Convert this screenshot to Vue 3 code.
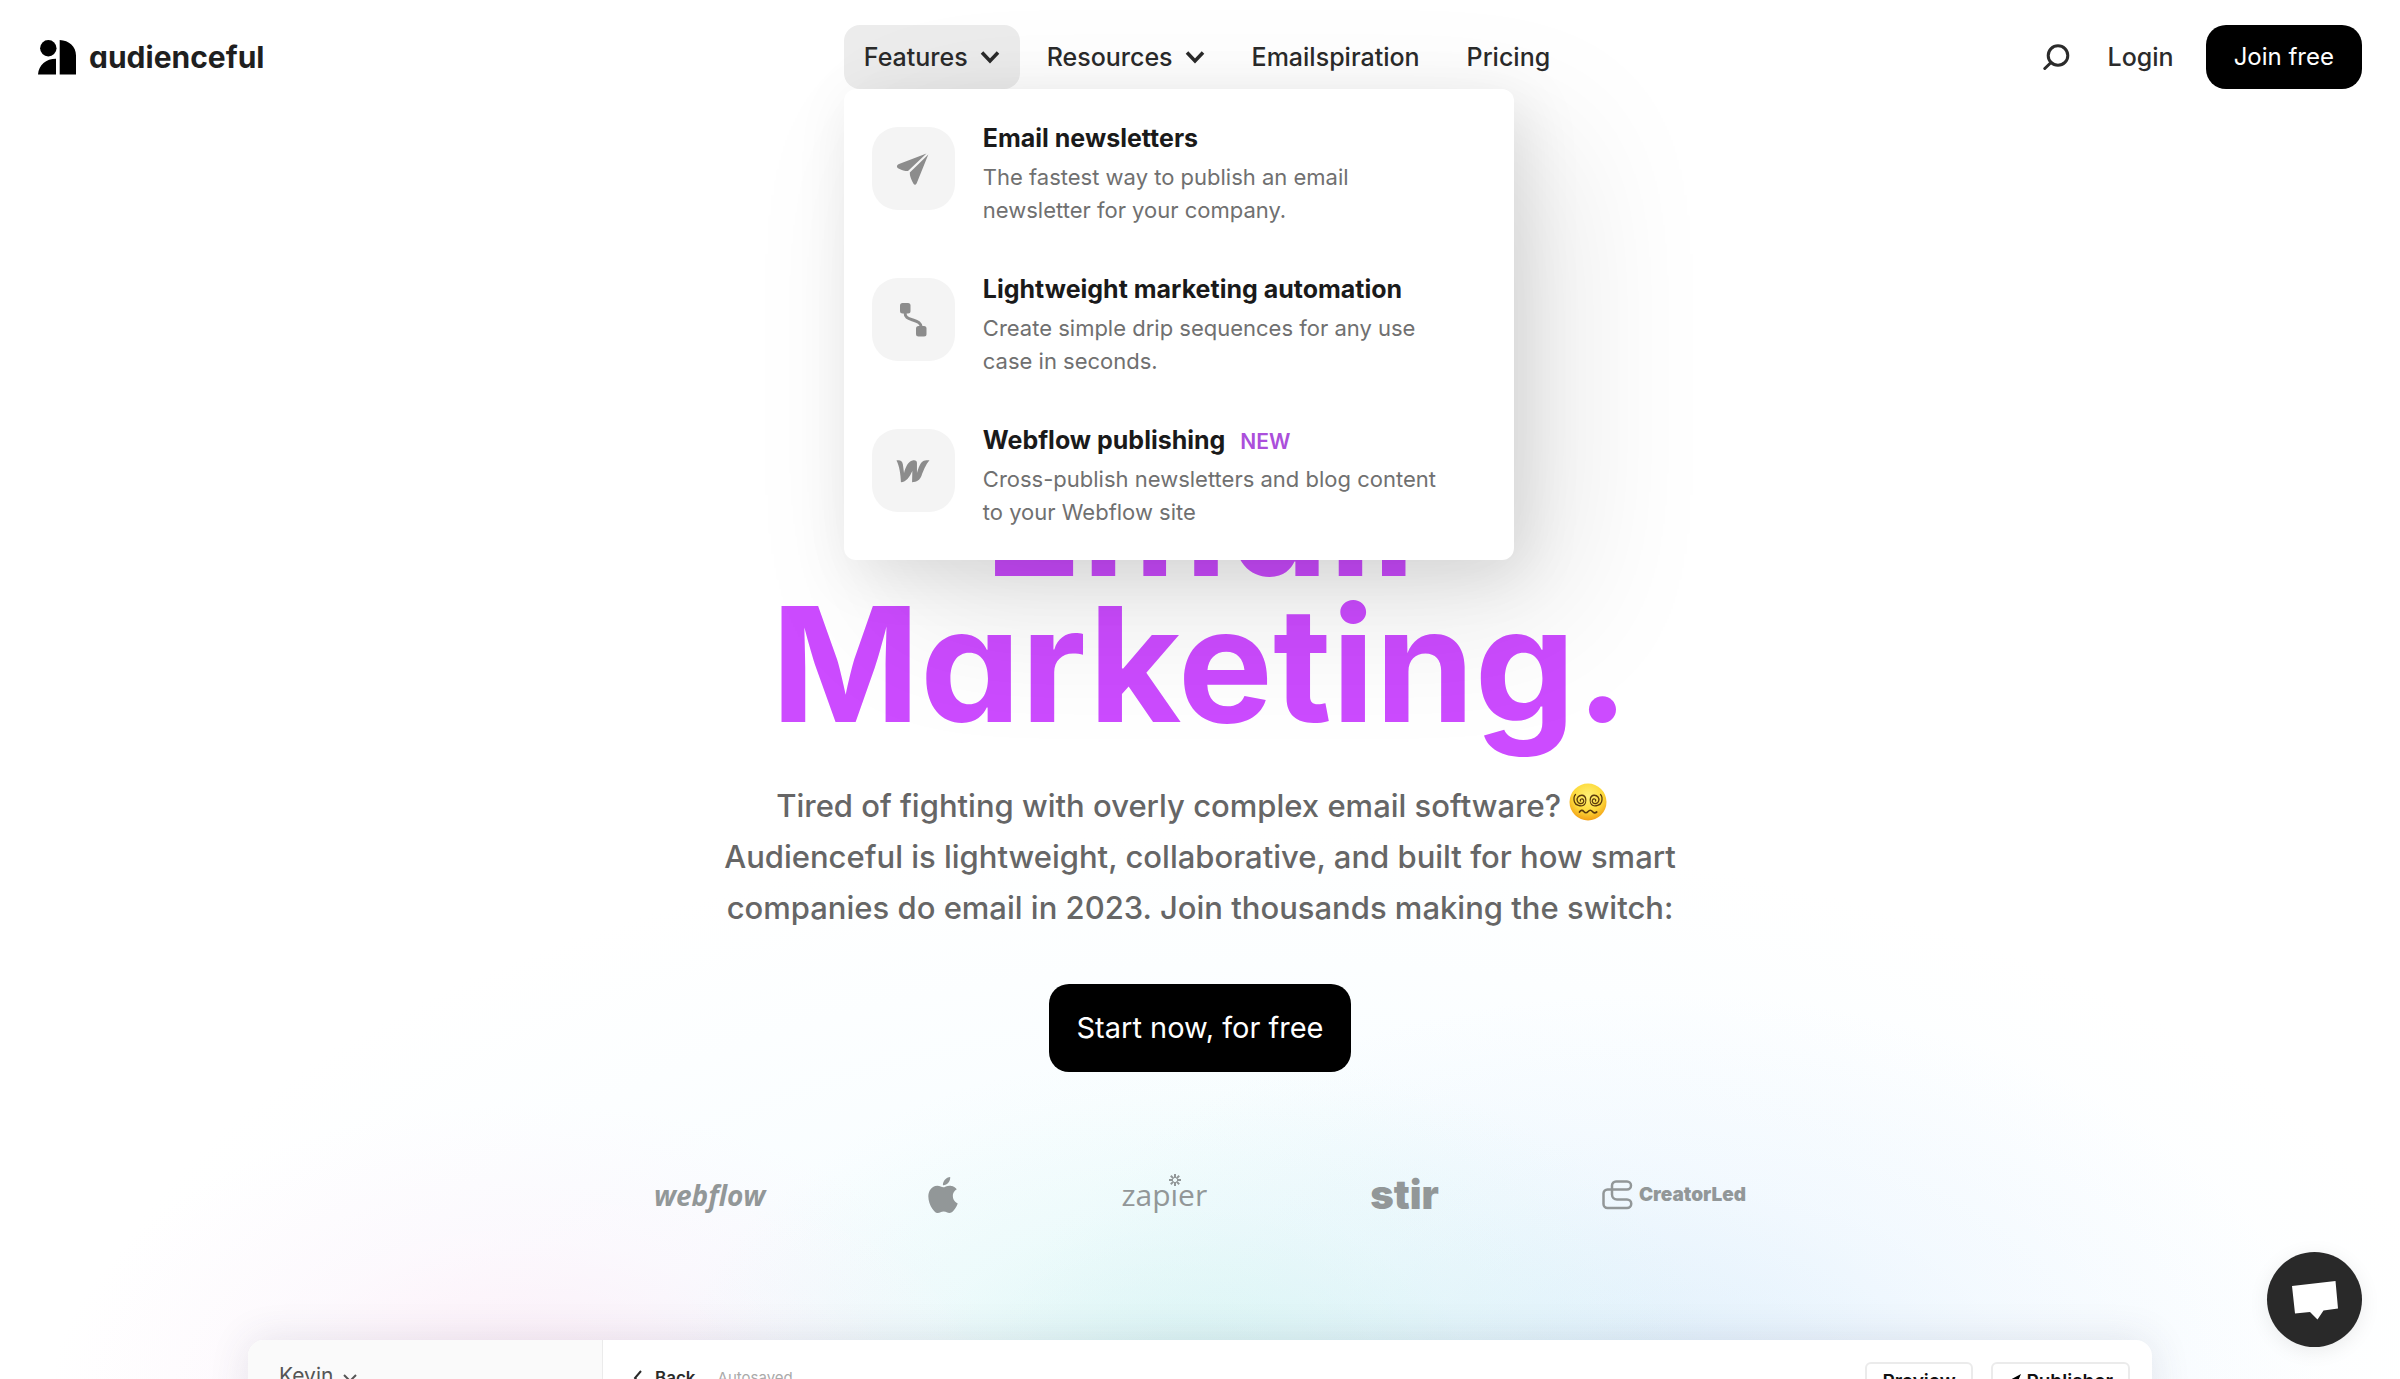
<script setup>
import { ref } from "vue";

const open = ref(true);

const features = [
  {
    icon: "plane",
    title: "Email newsletters",
    text: "The fastest way to publish an email newsletter for your company.",
  },
  {
    icon: "flow",
    title: "Lightweight marketing automation",
    text: "Create simple drip sequences for any use case in seconds.",
  },
  {
    icon: "webflow",
    title: "Webflow publishing",
    badge: "NEW",
    text: "Cross-publish newsletters and blog content to your Webflow site",
  },
];
</script>

<template>
  <div class="page">
    <header class="header">
      <a href="#" class="brand">
        <svg class="brand-mark" viewBox="0 0 38 35" aria-hidden="true">
          <circle cx="10.3" cy="8.2" r="8.2" />
          <path d="M0 34.500C.8 25 8 18.800 18 18.800V34.500zM21.700 0C31 .3 38 6.500 38 15.500V34.500H21.700z" />
        </svg>
        <span class="brand-name">audienceful</span>
      </a>

      <nav class="nav">
        <div class="nav-group">
          <button type="button" class="nav-item" :class="{ active: open }" :aria-expanded="open" @click="open = !open">
            Features
            <svg class="chevron" viewBox="0 0 20 14" aria-hidden="true"><path d="M2 2.500L10 11L18 2.500" /></svg>
          </button>
          <div v-if="open" class="dropdown">
            <a v-for="item in features" :key="item.title" href="#" class="feature">
              <span class="tile">
                <svg v-if="item.icon === 'plane'" viewBox="0 0 34 34" aria-hidden="true">
                  <path d="M30.500 1.500L3 12C.3 13.300.3 15.500 3 16.700C6 18.200 8.500 19 12 19z" />
                  <path d="M32.300 2.500L13.800 20.500C13.500 24 15.500 28 17.500 31.800C18.500 33.300 20 33 20.800 31z" />
                </svg>
                <svg v-else-if="item.icon === 'flow'" viewBox="0 0 34 34" aria-hidden="true">
                  <rect x="4" y="0" width="10.500" height="10.500" rx="2.500" />
                  <rect x="20" y="23" width="10.500" height="10.500" rx="2.500" />
                  <path class="wire" d="M9 9C9 15 12 15.500 17 17S25 20 25.500 25" />
                </svg>
                <svg v-else viewBox="0 0 36 36" aria-hidden="true">
                  <path
                    d="M.5 6.800C4.500 6 6.700 7.500 7.300 11L8.500 20C10 14 13 7.500 17.500 6.800C20.500 6.300 22.200 7 22.200 9.500V20C24 14 26 9 28.500 7.600C30 6.600 33 6.600 35.500 6.700C31.500 11 28.500 19 27 23C25.300 27.500 22 29.800 17 29.800L17.300 18C14.500 24 11 29.800 5.200 29.800C5 22 3.500 12 .5 6.800z"
                  />
                </svg>
              </span>
              <span class="feature-body">
                <span class="feature-title">
                  {{ item.title }}
                  <span v-if="item.badge" class="badge">{{ item.badge }}</span>
                </span>
                <span class="feature-text">{{ item.text }}</span>
              </span>
            </a>
          </div>
        </div>
        <button type="button" class="nav-item">
          Resources
          <svg class="chevron" viewBox="0 0 20 14" aria-hidden="true"><path d="M2 2.500L10 11L18 2.500" /></svg>
        </button>
        <a href="#" class="nav-item">Emailspiration</a>
        <a href="#" class="nav-item">Pricing</a>
      </nav>

      <div class="actions">
        <button type="button" class="search" aria-label="Search">
          <svg viewBox="0 0 27 27" aria-hidden="true">
            <circle cx="15" cy="11.500" r="9.800" />
            <path d="M8 18.500L1.800 24.500" />
          </svg>
        </button>
        <a href="#" class="login">Login</a>
        <a href="#" class="join">Join free</a>
      </div>
    </header>

    <main class="hero">
      <h1>Email<br />Marketing.</h1>
      <p class="lead">
        Tired of fighting with overly complex email software?
        <svg class="emoji" viewBox="0 0 38 38" role="img" aria-label="dizzy face">
          <defs>
            <radialGradient id="face" cx="50%" cy="35%" r="65%">
              <stop offset="0" stop-color="#fff176" />
              <stop offset="0.6" stop-color="#fddb3d" />
              <stop offset="1" stop-color="#f3a116" />
            </radialGradient>
          </defs>
          <circle cx="19" cy="19" r="18.500" fill="url(#face)" />
          <g fill="none" stroke="#5b3a0c" stroke-width="1.300" stroke-linecap="round">
            <path d="M11.500 18c-1-2 2-3 3-1s-1 4-3.500 3.500-4-4-2-6.500 6.500-2.500 7.500 1-.5 6.500-2.500 7.500-7.500 0-8.500-3.500-.5-6 1-7.500" />
            <path d="M26.500 18c1-2-2-3-3-1s1 4 3.500 3.500 4-4 2-6.500-6.500-2.500-7.500 1 .5 6.500 2.500 7.500 7.500 0 8.500-3.500.5-6-1-7.500" />
            <path d="M10.500 29q2.200-3 4.300-.5t4.300 0 4.300 0 4.300.5" stroke-width="1.700" />
          </g>
        </svg>&nbsp;&nbsp;
        <br />
        Audienceful is lightweight, collaborative, and built for how smart<br />
        companies do email in 2023. Join thousands making the switch:
      </p>
      <a href="#" class="cta">Start now, for free</a>

      <div class="logos">
        <span class="logo webflow">webflow</span>
        <svg class="apple" viewBox="2 0 20 24" role="img" aria-label="Apple">
          <path
            d="M12.152 6.896c-.948 0-2.415-1.078-3.960-1.040-2.040.027-3.910 1.183-4.961 3.014-2.117 3.675-.546 9.103 1.519 12.090 1.013 1.454 2.208 3.090 3.792 3.039 1.520-.065 2.090-.987 3.935-.987 1.831 0 2.350.987 3.960.948 1.637-.026 2.676-1.480 3.676-2.948 1.156-1.688 1.636-3.325 1.662-3.415-.039-.013-3.182-1.221-3.220-4.857-.026-3.040 2.480-4.494 2.597-4.559-1.429-2.090-3.623-2.324-4.390-2.376-2-.156-3.675 1.090-4.610 1.090zM15.530 3.830c.843-1.012 1.400-2.427 1.245-3.830-1.207.052-2.662.805-3.532 1.818-.780.896-1.454 2.338-1.273 3.714 1.338.104 2.715-.688 3.559-1.701"
          />
        </svg>
        <span class="logo zapier" aria-label="zapier">
          zap<span class="star-letter">ı<svg class="star" viewBox="0 0 12 12" aria-hidden="true">
            <path d="M6 0V4M6 8V12M0 6H4M8 6H12M1.800 1.800L4.600 4.600M7.400 7.400L10.200 10.200M10.200 1.800L7.400 4.600M4.600 7.400L1.800 10.200" />
          </svg></span>er
        </span>
        <span class="logo stir">stir</span>
        <span class="logo creator">
          <svg viewBox="0 0 31 30" aria-hidden="true">
            <path d="M14 1.500H25a4 4 0 0 1 0 8H5.500a4 4 0 0 0-4 4V24a4 4 0 0 0 4 4H25a4 4 0 0 0 0-8.500H15a5 5 0 0 1-5-5V5.500a4 4 0 0 1 4-4z" />
          </svg>
          CreatorLed
        </span>
      </div>
    </main>

    <section class="app">
      <aside class="app-side">
        Kevin
        <svg class="side-chevron" viewBox="0 0 14 10" aria-hidden="true"><path d="M1 2L7 8L13 2" /></svg>
      </aside>
      <div class="app-bar">
        <button type="button" class="back">
          <svg viewBox="0 0 10 16" aria-hidden="true"><path d="M8 1L2 8L8 15" /></svg>
          Back
        </button>
        <span class="saved">Autosaved</span>
        <button type="button" class="outline">Preview</button>
        <button type="button" class="outline">
          <svg viewBox="0 0 14 14" aria-hidden="true"><path d="M13 0L0 7L5 8.500L7 14z" /></svg>
          Publisher
        </button>
      </div>
    </section>

    <button type="button" class="chat" aria-label="Open chat">
      <svg viewBox="0 0 46 40" aria-hidden="true">
        <path d="M0 6L43.500 1L46 28.500L31.500 30.500L25.500 39.500L18 32L3 33.500z" />
      </svg>
    </button>
  </div>
</template>

<style>
body {
  margin: 0;
}
</style>

<style scoped>
.page {
  position: relative;
  height: 100vh;
  overflow: hidden;
  font-family: Inter, "Liberation Sans", sans-serif;
  color: #2b2b2b;
  background:
    radial-gradient(ellipse 20% 22% at 22% 102%, rgba(255, 215, 236, 0.45), rgba(255, 225, 245, 0.18) 55%, transparent),
    radial-gradient(ellipse 22% 26% at 50% 102%, rgba(190, 242, 228, 0.4), rgba(215, 250, 242, 0.2) 55%, transparent),
    radial-gradient(ellipse 28% 30% at 69% 102%, rgba(195, 222, 248, 0.4), rgba(215, 232, 252, 0.2) 55%, transparent),
    radial-gradient(ellipse 50% 42% at 53% 102%, rgba(210, 238, 248, 0.5), rgba(232, 248, 255, 0.25) 55%, transparent),
    #fff;
}

a {
  color: inherit;
  text-decoration: none;
}

button {
  font: inherit;
  color: inherit;
  border: 0;
  padding: 0;
  background: none;
  cursor: pointer;
}

/* header */
.header {
  display: grid;
  grid-template-columns: 1fr auto 1fr;
  align-items: center;
  padding: 25px 38px;
}

.brand {
  display: flex;
  align-items: center;
  gap: 13px;
}

.brand-mark {
  width: 38px;
  height: 35px;
}

.brand-name {
  font-size: 30px;
  font-weight: 700;
  font-feature-settings: "cv11";
  color: #1f1f1f;
}

.nav {
  display: flex;
  gap: 7px;
  margin-left: 14px;
}

.nav-group {
  position: relative;
}

.nav-item {
  display: flex;
  align-items: center;
  gap: 12px;
  height: 64px;
  padding: 0 20px;
  border-radius: 16px;
  font-size: 25px;
  font-weight: 500;
}

.nav-item.active {
  background: #ececec;
}

.chevron {
  width: 20px;
  height: 14px;
  fill: none;
  stroke: #2b2b2b;
  stroke-width: 3.500;
}

.dropdown {
  position: absolute;
  z-index: 5;
  top: 64px;
  left: 0;
  box-sizing: border-box;
  width: 670px;
  padding: 30px 28px 31px;
  display: flex;
  flex-direction: column;
  gap: 43px;
  background: #fff;
  border-radius: 12px;
  box-shadow:
    50px 50px 150px rgba(0, 0, 0, 0.1),
    10px 14px 60px rgba(0, 0, 0, 0.1);
}

.feature {
  display: flex;
  gap: 28px;
}

.tile {
  display: flex;
  align-items: center;
  justify-content: center;
  flex: none;
  width: 83px;
  height: 83px;
  margin-top: 8px;
  border-radius: 26px;
  background: #f4f4f4;
}

.tile svg {
  width: 34px;
  height: 34px;
  fill: #8c8c8c;
}

.tile .wire {
  fill: none;
  stroke: #8c8c8c;
  stroke-width: 3;
}

.feature-body {
  display: flex;
  flex-direction: column;
  gap: 4px;
}

.feature-title {
  font-size: 25px;
  line-height: 38px;
  font-weight: 700;
  color: #1a1a1a;
}

.badge {
  margin-left: 9px;
  font-size: 21px;
  line-height: 24px;
  font-weight: 600;
  color: #ab4fdb;
}

.feature-text {
  max-width: 470px;
  font-size: 22px;
  line-height: 33px;
  color: #707070;
}

.actions {
  display: flex;
  align-items: center;
  justify-content: flex-end;
}

.search svg {
  display: block;
  width: 27px;
  height: 27px;
  fill: none;
  stroke: #2b2b2b;
  stroke-width: 3;
  stroke-linecap: round;
}

.login {
  margin: 0 32px 0 38px;
  font-size: 25px;
  font-weight: 500;
}

.join {
  padding: 0 28px;
  border-radius: 20px;
  font-size: 24px;
  line-height: 64px;
  color: #fff;
  background: #000;
}

/* hero */
.hero {
  display: flex;
  flex-direction: column;
  align-items: center;
  padding-top: 331px;
  text-align: center;
}

h1 {
  margin: 0;
  font-size: 160px;
  line-height: 146px;
  font-weight: 700;
  font-feature-settings: "cv11";
  color: #cc4bff;
}

.lead {
  margin: 43px 0 0;
  font-size: 31px;
  line-height: 51px;
  font-weight: 500;
  color: #666;
}

.emoji {
  width: 38px;
  height: 38px;
  vertical-align: -4px;
}

.cta {
  margin-top: 51px;
  padding: 0 28px;
  border-radius: 20px;
  font-size: 29px;
  line-height: 88px;
  color: #fff;
  background: #000;
}

.logos {
  display: flex;
  align-items: center;
  gap: 163px;
  height: 48px;
  margin-top: 99px;
  color: #929798;
}

.logo {
  line-height: 48px;
}

.webflow {
  font-family: "Open Sans", sans-serif;
  font-size: 28px;
  font-style: italic;
  font-weight: 700;
}

.apple {
  width: 30px;
  height: 36px;
  fill: #929798;
}

.zapier {
  font-family: "Open Sans", sans-serif;
  font-size: 30px;
  font-weight: 500;
}

.star-letter {
  position: relative;
}

.star {
  position: absolute;
  top: 0;
  left: -2px;
  width: 12px;
  height: 12px;
  stroke: #929798;
  stroke-width: 2;
}

.stir {
  font-size: 40px;
  font-weight: 900;
}

.creator {
  display: flex;
  align-items: center;
  gap: 6px;
  font-size: 19px;
  font-weight: 900;
}

.creator svg {
  width: 31px;
  height: 30px;
  fill: none;
  stroke: #929798;
  stroke-width: 2.500;
}

/* product preview */
.app {
  display: flex;
  height: 900px;
  margin: 121px 248px 0;
  overflow: hidden;
  border-radius: 16px;
  background: #fff;
  box-shadow: 0 0 40px rgba(60, 60, 90, 0.12);
}

.app-side {
  box-sizing: border-box;
  width: 355px;
  padding: 22px 31px;
  border-right: 1px solid #ebebeb;
  font-size: 21px;
  line-height: 28px;
  color: #555;
  background: #fafafa;
}

.side-chevron {
  width: 14px;
  height: 10px;
  margin-left: 4px;
  fill: none;
  stroke: #555;
  stroke-width: 2;
}

.app-bar {
  display: flex;
  flex: 1;
  align-items: flex-start;
  gap: 18px;
  padding: 22px 22px 0 30px;
}

.back {
  display: flex;
  align-items: center;
  gap: 12px;
  font-size: 17px;
  line-height: 32px;
  font-weight: 600;
}

.back svg {
  width: 10px;
  height: 16px;
  fill: none;
  stroke: #2b2b2b;
  stroke-width: 2;
}

.saved {
  flex: 1;
  margin-left: 4px;
  font-size: 15px;
  line-height: 32px;
  color: #aaa;
}

.outline {
  padding: 0 15px;
  border: 2px solid #ebebeb;
  border-radius: 6px;
  font-size: 19px;
  line-height: 36px;
  font-weight: 600;
  color: #111;
}

.outline svg {
  width: 14px;
  height: 14px;
}

.chat {
  position: absolute;
  right: 38px;
  bottom: 32px;
  display: flex;
  align-items: center;
  justify-content: center;
  width: 95px;
  height: 95px;
  border-radius: 50%;
  background: #292929;
  box-shadow: 0 4px 20px rgba(0, 0, 0, 0.08);
}

.chat svg {
  width: 46px;
  height: 40px;
  fill: #fff;
}
</style>
